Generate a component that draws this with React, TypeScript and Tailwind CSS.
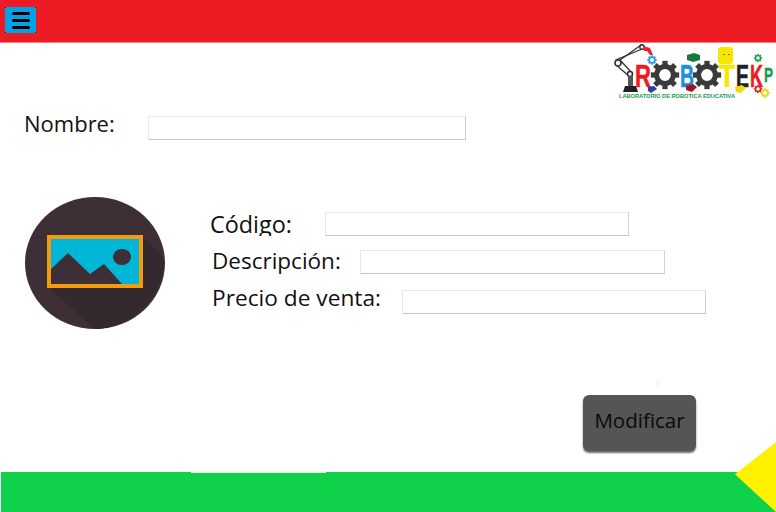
const font = { fontFamily: '"Open Sans","Noto Sans",sans-serif' };

function Gear({ x, y, r, c }: { x: number; y: number; r: number; c: string }) {
  const teeth = Array.from({ length: 8 }, (_, i) => i * 45);
  return (
    <g transform={`translate(${x} ${y})`}>
      {teeth.map((a) => (
        <rect key={a} x={-r * 0.22} y={-r * 1.18} width={r * 0.44} height={r * 0.5} fill={c} transform={`rotate(${a})`} />
      ))}
      <circle r={r * 0.7} fill="none" stroke={c} strokeWidth={r * 0.42} />
    </g>
  );
}

function Letter({ x, w, c, t }: { x: number; w: number; c: string; t: string }) {
  return (
    <text
      x={x}
      y={87}
      fill={c}
      stroke={c}
      strokeWidth={0.6}
      textLength={w}
      lengthAdjust="spacingAndGlyphs"
      style={{ fontFamily: '"Liberation Sans",sans-serif', fontWeight: 700, fontSize: 32 }}
    >
      {t}
    </text>
  );
}

function Logo() {
  return (
    <svg width="170" height="66" viewBox="606 42 170 66" className="block">
      <g fill="none" stroke="#333" strokeWidth="1.3" strokeLinecap="round">
        <path d="M632 73 L620 60 L641 45" />
        <path d="M629 76 L616 65 L616 60 L642 49" />
      </g>
      <circle cx="618" cy="63" r="3" fill="#fff" stroke="#333" strokeWidth="1.6" />
      <circle cx="630" cy="74" r="2.5" fill="#fff" stroke="#333" strokeWidth="1.6" />
      <circle cx="642" cy="47" r="2.2" fill="#fff" stroke="#333" strokeWidth="1.4" />
      <rect x="628" y="76" width="5" height="10" fill="#555" />
      <path d="M623 92 L625 86 L636 86 L638 92Z" fill="#222" />
      <path d="M643 46 L650 48 L653 55 L650 55 L647 51 L644 51Z" fill="#e8232a" />
      <Gear x={652} y={60} r={4} c="#2f9be0" />
      <Letter x={635} w={16} c="#ed1c24" t="R" />
      <Gear x={665} y={75} r={12} c="#3a3a3a" />
      <Letter x={680} w={14} c="#1b8fe0" t="B" />
      <Gear x={707} y={75} r={12} c="#3a3a3a" />
      <Letter x={719} w={16} c="#f7e600" t="T" />
      <Letter x={736} w={13} c="#222" t="E" />
      <Letter x={750} w={13} c="#ed1c24" t="K" />
      <text x="764" y="82" fill="#159a4a" stroke="#159a4a" strokeWidth={0.4} textLength={9} lengthAdjust="spacingAndGlyphs" style={{ fontFamily: '"Liberation Sans",sans-serif', fontWeight: 700, fontSize: 20 }}>P</text>
      <path d="M687 55 L694 53 L700 55 L700 60 L693 62 L687 60Z" fill="#157a3a" />
      <rect x="718" y="47" width="15" height="17" rx="3" fill="#f7e600" />
      <rect x="723" y="54" width="2" height="1" fill="#8a7a10" />
      <rect x="728" y="54" width="2" height="1" fill="#8a7a10" />
      <path d="M648 87 L654 86 L657 89 L651 93 L648 91Z" fill="#2a3f9e" />
      <path d="M686 86 L693 84 L697 87 L692 92 L686 90Z" fill="#a5141c" />
      <path d="M735 87 L742 85 L746 88 L741 93 L736 92Z" fill="#eedd10" />
      <Gear x={758} y={58} r={3.5} c="#1aa651" />
      <Gear x={758} y={89} r={3.5} c="#e8232a" />
      <Gear x={765} y={93} r={4} c="#f2d21a" />
      <text
        x="619"
        y="98"
        fill="#159a4a"
        textLength={116}
        lengthAdjust="spacingAndGlyphs"
        style={{ fontFamily: '"Liberation Sans",sans-serif', fontWeight: 700, fontSize: 5.6 }}
      >
        LABORATORIO DE ROBOTICA EDUCATIVA
      </text>
    </svg>
  );
}

function Field({
  label,
  labelClass,
  inputW,
  className = "",
}: {
  label: string;
  labelClass: string;
  inputW: string;
  className?: string;
}) {
  return (
    <div className={`flex items-start ${className}`}>
      <span className={`${labelClass} leading-[24px] text-[#111] whitespace-nowrap`}>{label}</span>
      <input
        aria-label={label}
        className={`${inputW} h-[24px] bg-white border border-[#e8e8e8] border-b-[#c4c4c4] border-r-[#d0d0d0]`}
      />
    </div>
  );
}

function Corner({ className }: { className: string }) {
  return <span className={`absolute w-[1px] h-[1px] bg-[#1d2730] ${className}`} />;
}

export default function App() {
  return (
    <div className="relative w-[776px] h-[512px] overflow-hidden bg-white flex flex-col" style={font}>
      <header className="h-[43px] shrink-0 bg-[#ed1c24] border-b border-[#f4837f] pl-[5px] pt-[7px]">
        <button aria-label="Menú" className="relative w-[31px] h-[26px] bg-[#00a2e8] flex flex-col items-center justify-center gap-[4px]">
          <Corner className="left-0 top-0" />
          <Corner className="right-0 top-0" />
          <Corner className="left-0 bottom-0" />
          <Corner className="right-0 bottom-0" />
          <span className="block w-[18px] h-[3px] rounded-full bg-black" />
          <span className="block w-[18px] h-[3px] rounded-full bg-black" />
          <span className="block w-[18px] h-[3px] rounded-full bg-black" />
        </button>
      </header>

      <main className="flex-1 flex flex-col min-h-0">
        <div className="h-[65px] flex justify-end shrink-0 -mt-px">
          <Logo />
        </div>

        <Field label="Nombre:" labelClass="w-[124px] text-[22px] -mt-[5px]" inputW="w-[318px]" className="pl-[24px] mt-[9px]" />

        <div className="flex mt-[57px] pl-[25px]">
          <svg width="141" height="134" viewBox="0 0 141 134" className="block shrink-0" role="img" aria-label="Imagen">
            <ellipse cx="70" cy="66" rx="70" ry="66" fill="#3e2f37" />
            <path d="M117 38 L139 62 C140 90 122 114 98 125 C88 130 78 132 70 132 L24 91Z" fill="#33292e" />
            <rect x="24" y="40" width="92" height="49" fill="#00b6d6" stroke="#f39c12" strokeWidth="4" />
            <path d="M26 87 L26 72 L43 56 L65 77 L79 67 L97 87Z" fill="#3e2f37" />
            <ellipse cx="97" cy="60" rx="9" ry="8" fill="#3e2f37" />
          </svg>

          <div className="ml-[44px] pt-[15px] flex flex-col">
            <div className="h-[24px] overflow-hidden">
              <Field label="Código:" labelClass="w-[115px] text-[23.4px]" inputW="w-[304px]" />
            </div>
            <Field label="Descripción:" labelClass="w-[148px] text-[22.5px] -mt-[1px]" inputW="w-[305px]" className="ml-[2px] mt-[14px]" />
            <Field label="Precio de venta:" labelClass="w-[190px] text-[22.7px] -mt-[4px]" inputW="w-[304px]" className="ml-[2px] mt-[16px]" />
          </div>
        </div>

        <div className="flex justify-end pr-[80px] mt-[64px]">
          <button className="w-[113px] h-[56px] pb-[6px] rounded-[6px] bg-[#555555] text-[20.5px] text-[#0a0a0a] shadow-[0_2px_2px_rgba(0,0,0,0.6)]">
            Modificar
          </button>
        </div>
      </main>

      <footer className="relative h-[40px] shrink-0 ml-[1px] bg-[#10d24a]">
        <div className="absolute left-[190px] top-0 w-[135px] h-[1px] bg-[#e4f5e8]" />
      </footer>
      <div className="absolute right-0 bottom-0 w-[41px] h-[70px] bg-[#fff200] [clip-path:polygon(100%_0,100%_100%,0_46%)]" />
      <div className="absolute left-[657px] top-[381px] w-[1px] h-[5px] bg-[#e8e8e8]" />
    </div>
  );
}
